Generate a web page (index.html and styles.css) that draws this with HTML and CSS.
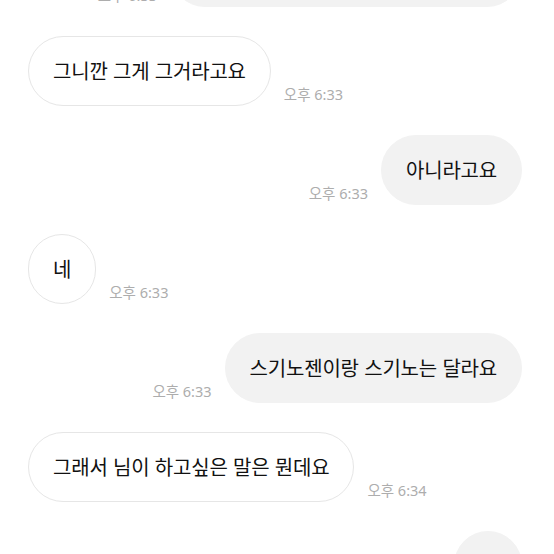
FILE: index.html
```html
<!DOCTYPE html>
<html lang="ko">
<head>
  <meta charset="UTF-8">
  <title>채팅</title>
  <link rel="stylesheet" href="styles.css">
</head>

<body>

  <div class="chat">
    <div class="row mine">
      <span class="time">오후 6:33</span>
      <div class="bubble">그러니까요 스기노젠이랑 스기노랑요</div>
    </div>

    <div class="row">
      <div class="bubble">그니깐 그게 그거라고요</div>
      <span class="time">오후 6:33</span>
    </div>

    <div class="row mine">
      <span class="time">오후 6:33</span>
      <div class="bubble">아니라고요</div>
    </div>

    <div class="row">
      <div class="bubble">네</div>
      <span class="time">오후 6:33</span>
    </div>

    <div class="row mine">
      <span class="time">오후 6:33</span>
      <div class="bubble">스기노젠이랑 스기노는 달라요</div>
    </div>

    <div class="row">
      <div class="bubble">그래서 님이 하고싶은 말은 뭔데요</div>
      <span class="time">오후 6:34</span>
    </div>

    <div class="row mine">
      <span class="time">오후 6:34</span>
      <div class="bubble">네</div>
    </div>
  </div>

</body>
</html>
```

FILE: styles.css
```css
body {
  margin: 0;
  font-family: "Noto Sans CJK KR", "Noto Sans", sans-serif;
  background-color: #ffffff;
  overflow: hidden;
}

.chat {
  margin-top: -63px;
  padding: 0 32px 0 28px;
  display: flex;
  flex-direction: column;
  gap: 29px;
}

.row {
  display: flex;
  align-items: flex-end;
  justify-content: flex-start;
  gap: 13px;
}

.row.mine {
  justify-content: flex-end;
}

.bubble {
  height: 70px;
  box-sizing: border-box;
  padding: 0 24px;
  display: flex;
  align-items: center;
  border: 1px solid #e6e6e6;
  border-radius: 35px;
  background-color: #ffffff;
  color: #111111;
  font-size: 20px;
  line-height: 24px;
  letter-spacing: -0.2px;
  white-space: nowrap;
}

.mine .bubble {
  background-color: #f2f2f2;
  border-color: #f2f2f2;
}

.time {
  font-family: "Noto Sans", "Noto Sans CJK KR", sans-serif;
  color: #adadad;
  font-size: 14.5px;
  line-height: 15px;
  margin-bottom: 4px;
  white-space: nowrap;
}
```
